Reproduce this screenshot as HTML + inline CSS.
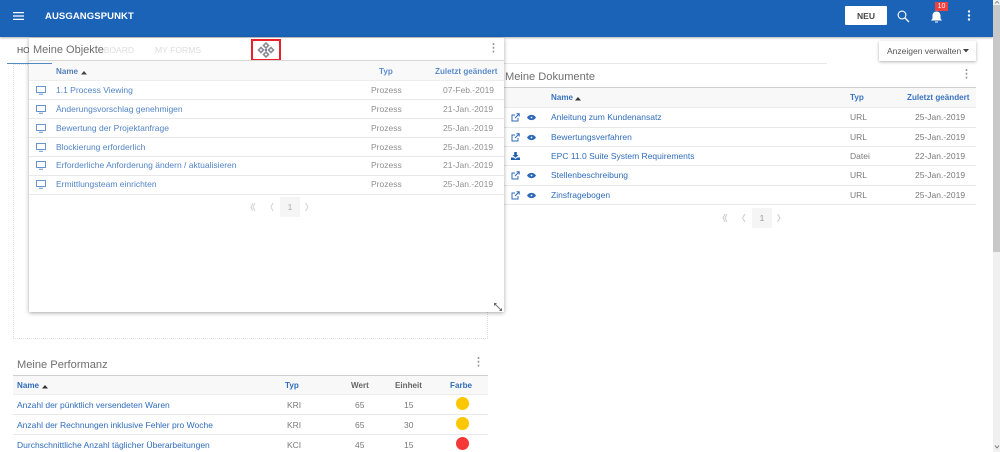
<!DOCTYPE html>
<html><head><meta charset="utf-8"><style>
html,body{margin:0;padding:0;background:#fff;overflow:hidden}
body{width:1000px;height:452px;position:relative;font-family:"Liberation Sans",sans-serif;font-size:8.5px;color:#7a7a7a}
.a{position:absolute;white-space:nowrap;line-height:12px}
.l{color:#5284c6}
.lk{color:#2f6cbb}
.h{font-weight:bold;font-size:8.1px;color:#3a74c0}
.t{font-size:11.1px;color:#6f6f6f;line-height:14px}
.ln{position:absolute;height:1px;background:#e8e8e8}
.hb{position:absolute;background:#f8f8f8;border-top:1px solid #d0d0d0;border-bottom:1px solid #ececec;box-sizing:border-box}
svg{position:absolute;overflow:visible}
</style></head><body>

<!-- header -->
<div class="a" style="left:0;top:0;width:993px;height:37px;background:#1a63b6;box-shadow:0 1px 2px rgba(0,0,0,.3)"></div>
<svg style="left:13px;top:12px" width="11" height="8"><path d="M0 .6H11M0 4H11M0 7.400H11" stroke="#fff" stroke-width="1.200"/></svg>
<div class="a" style="left:45px;top:11px;font-size:9.500px;font-weight:bold;color:#fff;letter-spacing:.1px">AUSGANGSPUNKT</div>
<div class="a" style="left:845px;top:6px;width:42px;height:19px;background:#fff;border-radius:1px;text-align:center;line-height:20px;font-size:8.500px;font-weight:bold;color:#444">NEU</div>
<svg style="left:897px;top:10px" width="13" height="13"><circle cx="5" cy="5" r="3.900" fill="none" stroke="#fff" stroke-width="1.100"/><path d="M8 8L12 12" stroke="#fff" stroke-width="1.300"/></svg>
<svg style="left:930px;top:10px" width="13" height="13"><path d="M1 10.500L2.500 8.500V5.500C2.500 3 4.300 1.500 6.500 1.500S10.500 3 10.500 5.500V8.500L12 10.500Z" fill="#fff"/><path d="M5 11.500H8V12.500H5Z" fill="#fff"/></svg>
<div class="a" style="left:935px;top:2px;width:13px;height:9px;background:#f04040;color:#fff;font-size:7px;line-height:9px;text-align:center">10</div>
<svg style="left:967px;top:10px" width="4" height="11"><circle cx="2" cy="1.500" r="1.200" fill="#fff"/><circle cx="2" cy="5.500" r="1.200" fill="#fff"/><circle cx="2" cy="9.500" r="1.200" fill="#fff"/></svg>

<!-- scrollbar -->
<div class="a" style="left:993px;top:0;width:7px;height:452px;background:#f0f0f0"></div>
<div class="a" style="left:993px;top:5px;width:7px;height:247px;background:#c8c8c8"></div>
<svg style="left:995px;top:1px" width="4" height="3"><path d="M0 2.500L2 .5L4 2.500" fill="none" stroke="#777" stroke-width=".8"/></svg>
<svg style="left:995px;top:445px" width="4" height="4"><path d="M0 0.500L2 3L4 0.500" fill="none" stroke="#666" stroke-width=".8"/></svg>

<!-- background strip -->
<div class="a" style="left:52px;top:63px;width:775px;height:1px;background:#e8e8e8"></div>
<div class="a" style="left:13px;top:64px;width:475px;height:275px;border:1px dotted #dedede;box-sizing:border-box"></div>

<!-- Anzeigen verwalten -->
<div class="a" style="left:879px;top:41px;width:97px;height:20px;background:#fff;box-shadow:0 1px 3px rgba(0,0,0,.3);line-height:20px;color:#555;padding-left:8px;box-sizing:border-box">Anzeigen verwalten</div>
<svg style="left:963px;top:49px" width="6" height="4"><path d="M0 0H6L3 3.500Z" fill="#444"/></svg>

<!-- Meine Dokumente -->
<div class="a t" style="left:505px;top:69.500px">Meine Dokumente</div>
<svg style="left:964.500px;top:69px" width="3" height="10"><path d="M1.500 0V10" stroke="#999" stroke-width="1.600" stroke-dasharray="2 1.800"/></svg>
<div class="hb" style="left:495px;top:87px;width:481px;height:21px"></div>
<div class="a h" style="left:551px;top:92px">Name</div>
<svg style="left:575px;top:97px" width="6" height="4"><path d="M0 3.500H6L3 0Z" fill="#333"/></svg>
<div class="a h" style="left:850px;top:92px">Typ</div>
<div class="a h" style="left:907px;top:92px">Zuletzt geändert</div>

<div class="a lk" style="left:551px;top:111px">Anleitung zum Kundenansatz</div><div class="a" style="left:850px;top:111px">URL</div><div class="a" style="left:915px;top:111px">25-Jan.-2019</div>
<div class="ln" style="left:495px;top:127px;width:481px"></div>
<div class="a lk" style="left:551px;top:131px">Bewertungsverfahren</div><div class="a" style="left:850px;top:131px">URL</div><div class="a" style="left:915px;top:131px">25-Jan.-2019</div>
<div class="ln" style="left:495px;top:146px;width:481px"></div>
<div class="a lk" style="left:551px;top:150px">EPC 11.0 Suite System Requirements</div><div class="a" style="left:850px;top:150px">Datei</div><div class="a" style="left:915px;top:150px">22-Jan.-2019</div>
<div class="ln" style="left:495px;top:165px;width:481px"></div>
<div class="a lk" style="left:551px;top:169px">Stellenbeschreibung</div><div class="a" style="left:850px;top:169px">URL</div><div class="a" style="left:915px;top:169px">25-Jan.-2019</div>
<div class="ln" style="left:495px;top:185px;width:481px"></div>
<div class="a lk" style="left:551px;top:189px">Zinsfragebogen</div><div class="a" style="left:850px;top:189px">URL</div><div class="a" style="left:915px;top:189px">25-Jan.-2019</div>
<div class="ln" style="left:495px;top:204px;width:481px"></div>

<!-- doc icons -->
<svg style="left:511px;top:113px" width="9" height="9"><path d="M7 5V8H1V2H4M4 5L8 1M5.500 .8H8.200V3.500" fill="none" stroke="#2c68b8" stroke-width="1"/></svg>
<svg style="left:527px;top:114px" width="9" height="7"><path d="M0 3.500C2 0 7 0 9 3.500C7 7 2 7 0 3.500Z" fill="#2c68b8"/><circle cx="4.500" cy="3.500" r=".9" fill="#fff"/></svg>
<svg style="left:511px;top:133px" width="9" height="9"><path d="M7 5V8H1V2H4M4 5L8 1M5.500 .8H8.200V3.500" fill="none" stroke="#2c68b8" stroke-width="1"/></svg>
<svg style="left:527px;top:134px" width="9" height="7"><path d="M0 3.500C2 0 7 0 9 3.500C7 7 2 7 0 3.500Z" fill="#2c68b8"/><circle cx="4.500" cy="3.500" r=".9" fill="#fff"/></svg>
<svg style="left:511px;top:152px" width="9" height="8"><path d="M3.200 0H5.800V3H7.500L4.500 5.800L1.500 3H3.200ZM0 5.500H2.500L4.500 7L6.500 5.500H9V8H0Z" fill="#1f5fb0"/></svg>
<svg style="left:511px;top:171px" width="9" height="9"><path d="M7 5V8H1V2H4M4 5L8 1M5.500 .8H8.200V3.500" fill="none" stroke="#2c68b8" stroke-width="1"/></svg>
<svg style="left:527px;top:172px" width="9" height="7"><path d="M0 3.500C2 0 7 0 9 3.500C7 7 2 7 0 3.500Z" fill="#2c68b8"/><circle cx="4.500" cy="3.500" r=".9" fill="#fff"/></svg>
<svg style="left:511px;top:191px" width="9" height="9"><path d="M7 5V8H1V2H4M4 5L8 1M5.500 .8H8.200V3.500" fill="none" stroke="#2c68b8" stroke-width="1"/></svg>
<svg style="left:527px;top:192px" width="9" height="7"><path d="M0 3.500C2 0 7 0 9 3.500C7 7 2 7 0 3.500Z" fill="#2c68b8"/><circle cx="4.500" cy="3.500" r=".9" fill="#fff"/></svg>

<!-- doc pagination -->
<div class="a" style="left:752px;top:208px;width:20px;height:20px;background:#f5f5f5;text-align:center;line-height:20px;color:#999">1</div>
<svg style="left:721px;top:213px" width="66" height="10"><path d="M4 1L2 5L4 9M6 1L4 5L6 9M24 1L21.500 5L24 9M56.500 1L59 5L56.500 9" fill="none" stroke="#ccc" stroke-width="1"/></svg>

<!-- Meine Performanz -->
<div class="a t" style="left:17px;top:357.500px">Meine Performanz</div>
<svg style="left:477px;top:357px" width="3" height="10"><path d="M1.500 0V10" stroke="#999" stroke-width="1.600" stroke-dasharray="2 1.800"/></svg>
<div class="hb" style="left:13px;top:375px;width:475px;height:20px"></div>
<div class="a h" style="left:17px;top:380px;color:#2f6cbb">Name</div>
<svg style="left:42px;top:385px" width="6" height="4"><path d="M0 3.500H6L3 0Z" fill="#333"/></svg>
<div class="a h" style="left:285px;top:380px;color:#2f6cbb">Typ</div>
<div class="a h" style="left:351px;top:380px;color:#666">Wert</div>
<div class="a h" style="left:395px;top:380px;color:#666">Einheit</div>
<div class="a h" style="left:450px;top:380px;color:#2f6cbb">Farbe</div>

<div class="a lk" style="left:17px;top:399px">Anzahl der pünktlich versendeten Waren</div><div class="a" style="left:287px;top:399px">KRI</div><div class="a" style="left:355px;top:399px">65</div><div class="a" style="left:404px;top:399px">15</div>
<div class="a" style="left:456px;top:397px;width:13px;height:13px;border-radius:50%;background:#fdc700"></div>
<div class="ln" style="left:13px;top:414px;width:475px"></div>
<div class="a lk" style="left:17px;top:419px">Anzahl der Rechnungen inklusive Fehler pro Woche</div><div class="a" style="left:287px;top:419px">KRI</div><div class="a" style="left:355px;top:419px">65</div><div class="a" style="left:404px;top:419px">30</div>
<div class="a" style="left:456px;top:417px;width:13px;height:13px;border-radius:50%;background:#fdc700"></div>
<div class="ln" style="left:13px;top:434px;width:475px"></div>
<div class="a lk" style="left:17px;top:439px">Durchschnittliche Anzahl täglicher Überarbeitungen</div><div class="a" style="left:287px;top:439px">KCI</div><div class="a" style="left:355px;top:439px">45</div><div class="a" style="left:404px;top:439px">15</div>
<div class="a" style="left:456px;top:437px;width:13px;height:13px;border-radius:50%;background:#f53737"></div>

<!-- floating card -->
<div class="a" style="left:29px;top:38px;width:475px;height:274px;background:#fff;box-shadow:0 1px 4px rgba(0,0,0,.35)"></div>
<!-- tabs (HOME clipped at card edge, others showing through) -->
<div class="a" style="left:0;top:37px;width:29px;height:26px;overflow:hidden"><div class="a" style="left:17px;top:7px;color:#444">HOME</div></div>
<div class="a" style="left:104px;top:44px;width:30px;height:12px;overflow:hidden;color:#ddd;text-align:right;direction:rtl">DASHBOARD</div>
<div class="a" style="left:155px;top:44px;color:#ddd;font-size:8.600px">MY FORMS</div>
<div class="a t" style="left:33px;top:43px;font-size:11px">Meine Objekte</div>
<svg style="left:492px;top:42.500px" width="3" height="10"><path d="M1.500 0V10" stroke="#999" stroke-width="1.600" stroke-dasharray="2 1.800"/></svg>
<div class="a" style="left:251px;top:39px;width:30px;height:22px;border:2px solid #e8202a;box-sizing:border-box"></div>
<svg style="left:257px;top:42px" width="18" height="16" fill="none" stroke="#8c8c92" stroke-width="1.600"><path d="M9 1L11.500 3.500L9 6L6.500 3.500Z"/><path d="M9 10L11.500 12.500L9 15L6.500 12.500Z"/><path d="M4 5.500L6.500 8L4 10.500L1.500 8Z"/><path d="M14 5.500L16.500 8L14 10.500L11.500 8Z"/><circle cx="9" cy="8" r="1.200" fill="#7a7ab0" stroke="none"/></svg>
<div class="a" style="left:29px;top:60px;width:475px;height:1px;background:#d8d8d8"></div>
<div class="a" style="left:29px;top:61px;width:475px;height:20px;background:#f9f9f9;border-bottom:1px solid #eee;box-sizing:border-box"></div>
<div class="a" style="left:7px;top:63px;width:45px;height:1px;background:#1a63b6;opacity:.75"></div>
<div class="a h" style="left:56px;top:66px;color:#5580ba">Name</div>
<svg style="left:81px;top:71px" width="6" height="4"><path d="M0 3.500H6L3 0Z" fill="#444"/></svg>
<div class="a h" style="left:379px;top:66px;color:#5c8ccc">Typ</div>
<div class="a h" style="left:435px;top:66px;color:#5c8ccc">Zuletzt geändert</div>

<div class="a l" style="left:56px;top:84px">1.1 Process Viewing</div><div class="a" style="left:371px;top:84px;color:#909090">Prozess</div><div class="a" style="left:443px;top:84px;color:#909090">07-Feb.-2019</div>
<div class="ln" style="left:29px;top:99px;width:475px"></div>
<div class="a l" style="left:56px;top:103px">Änderungsvorschlag genehmigen</div><div class="a" style="left:371px;top:103px;color:#909090">Prozess</div><div class="a" style="left:443px;top:103px;color:#909090">21-Jan.-2019</div>
<div class="ln" style="left:29px;top:118px;width:475px"></div>
<div class="a l" style="left:56px;top:122px">Bewertung der Projektanfrage</div><div class="a" style="left:371px;top:122px;color:#909090">Prozess</div><div class="a" style="left:443px;top:122px;color:#909090">25-Jan.-2019</div>
<div class="ln" style="left:29px;top:137px;width:475px"></div>
<div class="a l" style="left:56px;top:141px">Blockierung erforderlich</div><div class="a" style="left:371px;top:141px;color:#909090">Prozess</div><div class="a" style="left:443px;top:141px;color:#909090">25-Jan.-2019</div>
<div class="ln" style="left:29px;top:156px;width:475px"></div>
<div class="a l" style="left:56px;top:159px">Erforderliche Anforderung ändern / aktualisieren</div><div class="a" style="left:371px;top:159px;color:#909090">Prozess</div><div class="a" style="left:443px;top:159px;color:#909090">21-Jan.-2019</div>
<div class="ln" style="left:29px;top:175px;width:475px"></div>
<div class="a l" style="left:56px;top:178px">Ermittlungsteam einrichten</div><div class="a" style="left:371px;top:178px;color:#909090">Prozess</div><div class="a" style="left:443px;top:178px;color:#909090">25-Jan.-2019</div>
<div class="ln" style="left:29px;top:194px;width:475px"></div>

<svg style="left:36px;top:86px" width="10" height="9"><path d="M.5 .5H9.500V6.500H.5ZM3 8.300H7" fill="none" stroke="#6a94cc"/></svg>
<svg style="left:36px;top:105px" width="10" height="9"><path d="M.5 .5H9.500V6.500H.5ZM3 8.300H7" fill="none" stroke="#6a94cc"/></svg>
<svg style="left:36px;top:124px" width="10" height="9"><path d="M.5 .5H9.500V6.500H.5ZM3 8.300H7" fill="none" stroke="#6a94cc"/></svg>
<svg style="left:36px;top:143px" width="10" height="9"><path d="M.5 .5H9.500V6.500H.5ZM3 8.300H7" fill="none" stroke="#6a94cc"/></svg>
<svg style="left:36px;top:161px" width="10" height="9"><path d="M.5 .5H9.500V6.500H.5ZM3 8.300H7" fill="none" stroke="#6a94cc"/></svg>
<svg style="left:36px;top:180px" width="10" height="9"><path d="M.5 .5H9.500V6.500H.5ZM3 8.300H7" fill="none" stroke="#6a94cc"/></svg>

<!-- card pagination -->
<div class="a" style="left:280px;top:197px;width:20px;height:20px;background:#f5f5f5;text-align:center;line-height:20px;color:#aaa">1</div>
<svg style="left:250px;top:202px" width="60" height="10"><path d="M3 1L1 5L3 9M5 1L3 5L5 9M23 1L21 5L23 9M55.500 1L58 5L55.500 9" fill="none" stroke="#d4d4d4" stroke-width="1"/></svg>
<svg style="left:494px;top:303px" width="8" height="8"><path d="M1 1L7 7" stroke="#777" stroke-width="1"/><path d="M0 0H3L0 3ZM8 8H5L8 5Z" fill="#666"/></svg>
</body></html>
